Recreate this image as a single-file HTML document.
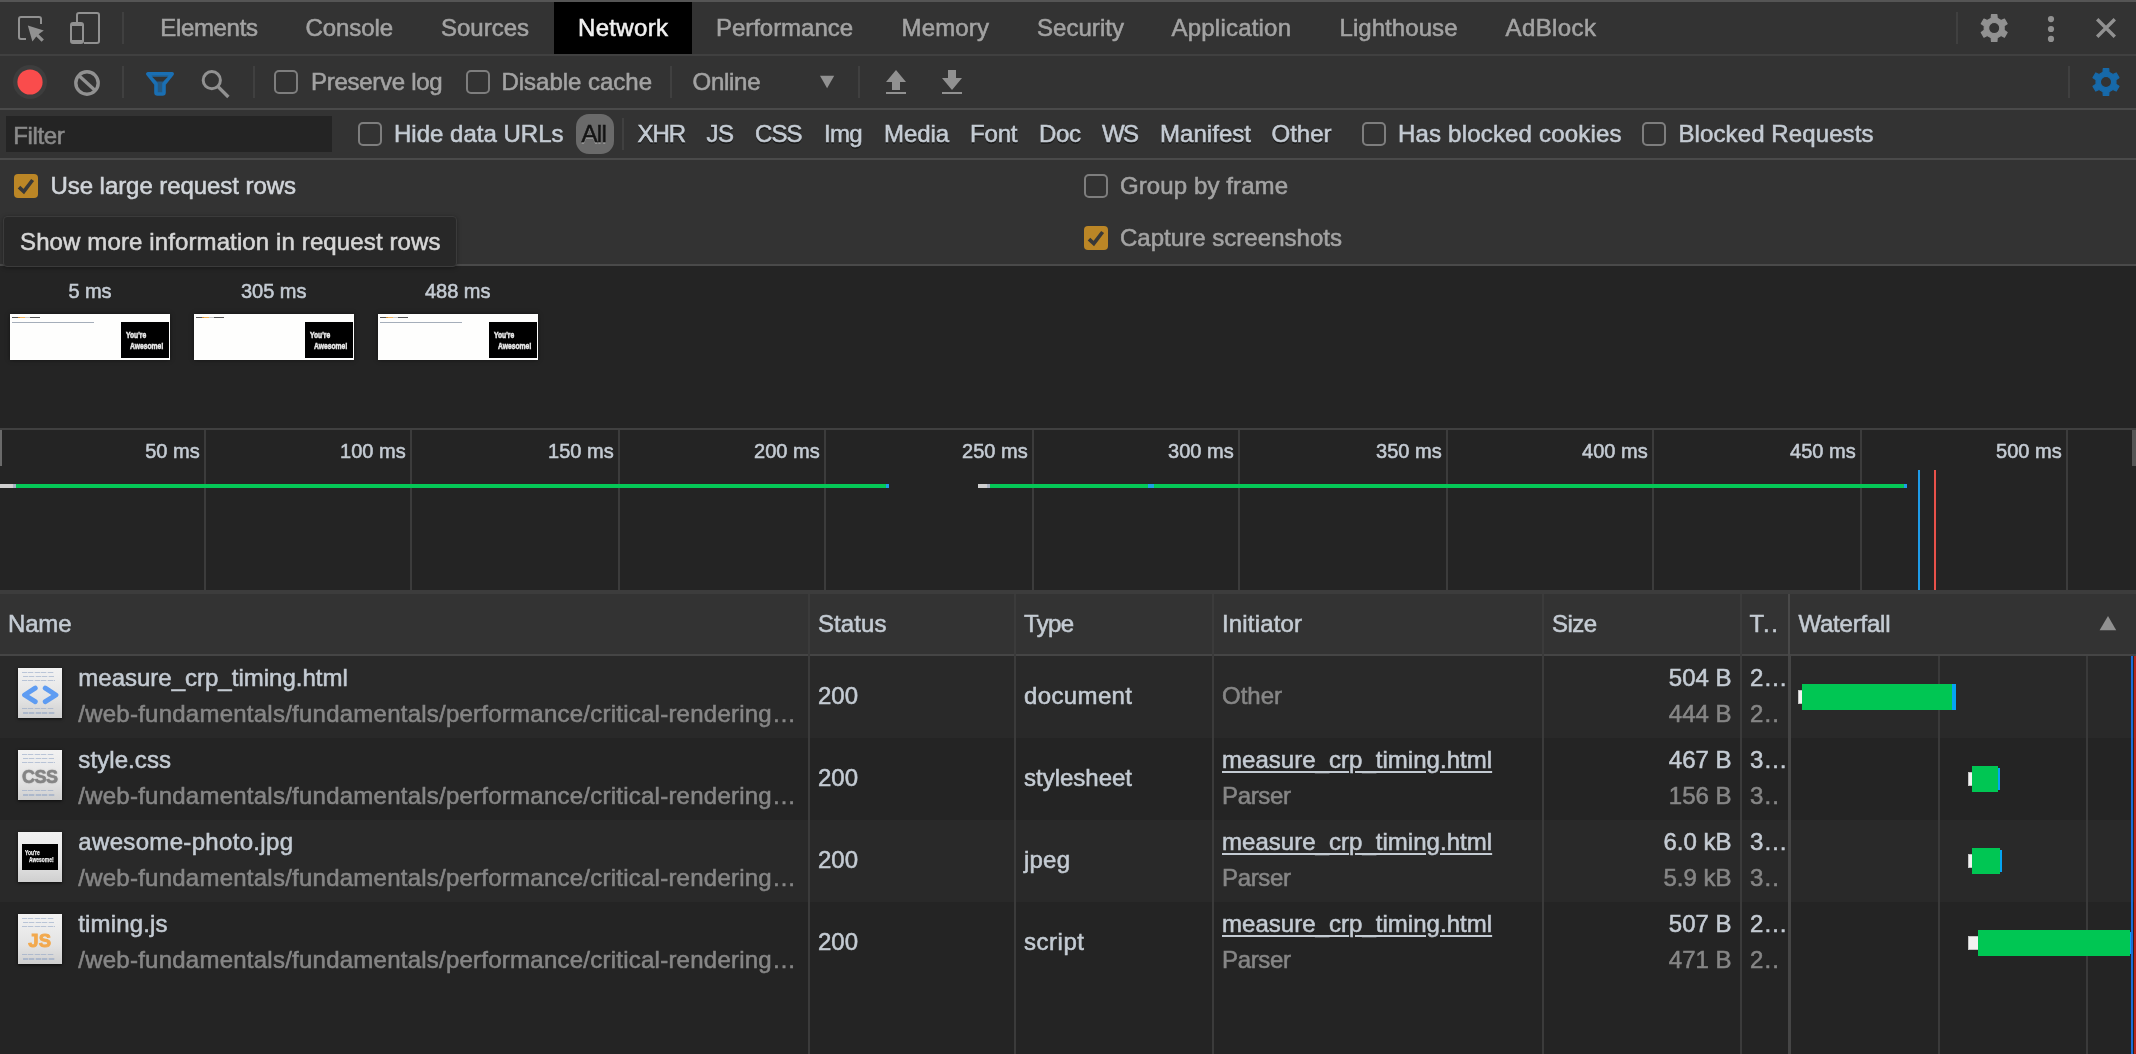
<!DOCTYPE html>
<html><head><meta charset="utf-8"><title>DevTools - Network</title>
<style>
html,body{margin:0;padding:0;background:#242424;}
#root{will-change:transform;position:relative;width:2136px;height:1054px;overflow:hidden;background:#242424;font-family:'Liberation Sans',sans-serif;}
.t{position:absolute;white-space:pre;font-family:'Liberation Sans',sans-serif;-webkit-text-stroke:0.55px;}
.b{position:absolute;}
svg{position:absolute;overflow:visible;}
.cb{position:absolute;width:24px;height:24px;box-sizing:border-box;border:2px solid #7e7e7e;border-radius:5px;}
.cbc{position:absolute;width:24px;height:24px;border-radius:4px;background:#bb8626;}
.vd{position:absolute;width:2px;background:#474747;}
@media (max-width:1100px){#root{zoom:.5}}

</style></head>
<body>
<div id="root">
<div class=b style="left:0px;top:0px;width:2136px;height:264px;background:#333;"></div>
<div class=b style="left:0px;top:0px;width:2136px;height:2px;background:#555;"></div>
<div class=b style="left:0px;top:54px;width:2136px;height:2px;background:#404040;"></div>
<div class=b style="left:554px;top:2px;width:138px;height:52px;background:#000;"></div>
<div class=b style="left:0px;top:108px;width:2136px;height:2px;background:#4a4a4a;"></div>
<div class=b style="left:0px;top:158px;width:2136px;height:2px;background:#4a4a4a;"></div>
<div class=b style="left:0px;top:264px;width:2136px;height:2px;background:#4a4a4a;"></div>
<div class=b style="left:0px;top:428px;width:2136px;height:2px;background:#404040;"></div>
<div class=b style="left:0px;top:590px;width:2136px;height:4px;background:#3c3c3c;"></div>
<div class=b style="left:0px;top:594px;width:2136px;height:60px;background:#333;"></div>
<div class=b style="left:0px;top:654px;width:2136px;height:2px;background:#454545;"></div>
<div class=b style="left:0px;top:656px;width:2136px;height:82px;background:#292929;"></div>
<div class=b style="left:0px;top:820px;width:2136px;height:82px;background:#292929;"></div>
<svg style="left:16px;top:12px" width="32" height="32" viewBox="16 12 32 32">
<path d="M41 24 V19 a2 2 0 0 0 -2 -2 H21 a2 2 0 0 0 -2 2 V37 a2 2 0 0 0 2 2 H26" fill="none" stroke="#919191" stroke-width="2"/>
<path d="M27.8 25.6 L43.8 30.6 L38.6 34.2 L43.9 39.5 L41.6 41.8 L36.3 36.5 L32.4 41.4 Z" fill="#919191"/></svg>
<svg style="left:68px;top:10px" width="36" height="36" viewBox="68 10 36 36">
<path d="M77 22 V15 a2 2 0 0 1 2 -2 H97 a2 2 0 0 1 2 2 V41 a2 2 0 0 1 -2 2 H84" fill="none" stroke="#919191" stroke-width="2"/>
<rect x="71" y="23" width="12" height="20" rx="2" fill="none" stroke="#919191" stroke-width="2"/>
<rect x="71" y="23" width="12" height="3" fill="#919191"/><rect x="71" y="40" width="12" height="3" fill="#919191"/></svg>
<div class=b style="left:122px;top:12px;width:2px;height:32px;background:#404040;"></div>
<div class=b style="left:1956px;top:12px;width:2px;height:32px;background:#404040;"></div>
<div class=b style="left:122px;top:66px;width:2px;height:32px;background:#404040;"></div>
<div class=b style="left:253px;top:66px;width:2px;height:32px;background:#404040;"></div>
<div class=b style="left:670px;top:66px;width:2px;height:32px;background:#404040;"></div>
<div class=b style="left:858px;top:66px;width:2px;height:32px;background:#404040;"></div>
<div class=b style="left:2068px;top:66px;width:2px;height:32px;background:#404040;"></div>
<div class=b style="left:622px;top:118px;width:2px;height:32px;background:#404040;"></div>
<svg style="left:1976px;top:10px" width="36" height="36" viewBox="1976 10 36 36"><path d="M1991.19 18.36 L1991.49 14.72 L1996.91 14.72 L1997.21 18.36 L2001.13 20.62 L2004.43 19.06 L2007.14 23.76 L2004.15 25.84 L2004.15 30.36 L2007.14 32.44 L2004.43 37.14 L2001.13 35.58 L1997.21 37.84 L1996.91 41.48 L1991.49 41.48 L1991.19 37.84 L1987.27 35.58 L1983.97 37.14 L1981.26 32.44 L1984.25 30.36 L1984.25 25.84 L1981.26 23.76 L1983.97 19.06 L1987.27 20.62Z M1988.60 28.10 a5.6 5.6 0 1 0 11.2 0 a5.6 5.6 0 1 0 -11.2 0Z" fill="#919191" fill-rule="evenodd" stroke="#919191" stroke-width="1.2" stroke-linejoin="round"/></svg>
<svg style="left:2088px;top:64px" width="36" height="36" viewBox="2088 64 36 36"><path d="M2102.99 72.26 L2103.29 68.62 L2108.71 68.62 L2109.01 72.26 L2112.93 74.52 L2116.23 72.96 L2118.94 77.66 L2115.95 79.74 L2115.95 84.26 L2118.94 86.34 L2116.23 91.04 L2112.93 89.48 L2109.01 91.74 L2108.71 95.38 L2103.29 95.38 L2102.99 91.74 L2099.07 89.48 L2095.77 91.04 L2093.06 86.34 L2096.05 84.26 L2096.05 79.74 L2093.06 77.66 L2095.77 72.96 L2099.07 74.52Z M2100.40 82.00 a5.6 5.6 0 1 0 11.2 0 a5.6 5.6 0 1 0 -11.2 0Z" fill="#1769a9" fill-rule="evenodd" stroke="#1769a9" stroke-width="1.2" stroke-linejoin="round"/></svg>
<svg style="left:2040px;top:10px" width="22" height="36" viewBox="2040 10 22 36"><circle cx="2051" cy="19.1" r="3.1" fill="#919191"/><circle cx="2051" cy="29" r="3.1" fill="#919191"/><circle cx="2051" cy="38.9" r="3.1" fill="#919191"/></svg>
<svg style="left:2090px;top:12px" width="32" height="32" viewBox="2090 12 32 32"><path d="M2097.2 19.2 L2114.8 36.8 M2114.8 19.2 L2097.2 36.8" stroke="#919191" stroke-width="3.4" fill="none"/></svg>
<svg style="left:10px;top:62px" width="40" height="40" viewBox="10 62 40 40"><circle cx="30" cy="82" r="17" fill="#3d3d3d"/><circle cx="30" cy="82" r="12.6" fill="#fa4c4c"/></svg>
<svg style="left:70px;top:66px" width="34" height="34" viewBox="70 66 34 34"><circle cx="87" cy="83" r="11.2" fill="none" stroke="#919191" stroke-width="3.4"/><path d="M78.8 75.6 L95.2 90.4" stroke="#919191" stroke-width="3.4"/></svg>
<svg style="left:144px;top:70px" width="32" height="28" viewBox="144 70 32 28"><path d="M147.8 73.8 H172.2 L164 84 V92.5 a1.5 1.5 0 0 1 -1.5 1.5 H157.5 a1.5 1.5 0 0 1 -1.5 -1.5 V84 Z" fill="#255982" stroke="#1a6fb3" stroke-width="3.6" stroke-linejoin="round"/><path d="M152.4 77 H167.6 L163 81.6 H157 Z" fill="#333"/></svg>
<svg style="left:198px;top:66px" width="36" height="36" viewBox="198 66 36 36"><circle cx="211.8" cy="80.2" r="8.6" fill="none" stroke="#919191" stroke-width="3"/><path d="M218 86.6 L228.4 97" stroke="#919191" stroke-width="3.4"/></svg>
<svg style="left:818px;top:74px" width="18" height="16" viewBox="818 74 18 16"><path d="M820 75.7 H834.2 L827.1 88.2 Z" fill="#919191"/></svg>
<svg style="left:884px;top:68px" width="24" height="28" viewBox="884 68 24 28"><path d="M896 70 L906 82 H900 V90 H892 V82 H886 Z M886 92 H906 V94 H886 Z" fill="#919191"/></svg>
<svg style="left:940px;top:68px" width="24" height="28" viewBox="940 68 24 28"><path d="M948 70 H956 V78 H962 L952 90 L942 78 H948 Z M942 92 H962 V94 H942 Z" fill="#919191"/></svg>
<div class=cb style="left:274px;top:70px"></div>
<div class=cb style="left:466px;top:70px"></div>
<div class=cb style="left:358px;top:122px"></div>
<div class=cb style="left:1362px;top:122px"></div>
<div class=cb style="left:1642px;top:122px"></div>
<div class=cbc style="left:14px;top:174px"></div>
<svg style="left:14px;top:174px" width="24" height="24" viewBox="0 0 24 24"><path d="M5 13.2 L9.8 17.6 L18.6 6" fill="none" stroke="#383838" stroke-width="3.7"/></svg>
<div class=cb style="left:1084px;top:174px"></div>
<div class=cbc style="left:1084px;top:226px"></div>
<svg style="left:1084px;top:226px" width="24" height="24" viewBox="0 0 24 24"><path d="M5 13.2 L9.8 17.6 L18.6 6" fill="none" stroke="#383838" stroke-width="3.7"/></svg>
<div class=b style="left:6px;top:116px;width:326px;height:36px;background:#242424;"></div>
<div class=b style="left:576px;top:114px;width:38px;height:40px;background:#6a6a6a;border-radius:13px;"></div>
<div class=b style="left:3px;top:216px;width:454px;height:51px;background:#282828;box-sizing:border-box;border:1px solid #3b3b3b;border-radius:4px;box-shadow:0 1px 4px rgba(0,0,0,.35);"></div>
<div class=b style="left:10px;top:314px;width:160px;height:46px;background:#fefefd;box-shadow:0 0 4px rgba(0,0,0,.5)"></div>
<div class=b style="left:121px;top:322px;width:48px;height:36px;background:#000;"></div>
<div class=b style="left:11.5px;top:316.6px;width:8px;height:1.6px;background:#555;"></div>
<div class=b style="left:17.5px;top:316.6px;width:7px;height:1.6px;background:#f0a030;opacity:.8"></div>
<div class=b style="left:24.5px;top:316.6px;width:5px;height:1.6px;background:#ccc;"></div>
<div class=b style="left:29.5px;top:316.6px;width:10px;height:1.6px;background:#555;"></div>
<div class=b style="left:11.5px;top:322.1px;width:82px;height:1.3px;background:#7f8c9c;opacity:.7"></div>
<span class=t style="left:126px;top:330.2px;font-size:9.5px;line-height:10px;font-weight:bold;color:#e8e8e8;transform:scaleX(.71);transform-origin:0 0">You're</span>
<span class=t style="left:129.7px;top:340.6px;font-size:9.5px;line-height:10px;font-weight:bold;color:#e8e8e8;transform:scaleX(.71);transform-origin:0 0">Awesome!</span>
<div class=b style="left:194px;top:314px;width:160px;height:46px;background:#fefefd;box-shadow:0 0 4px rgba(0,0,0,.5)"></div>
<div class=b style="left:305px;top:322px;width:48px;height:36px;background:#000;"></div>
<div class=b style="left:195.5px;top:316.6px;width:8px;height:1.6px;background:#555;"></div>
<div class=b style="left:201.5px;top:316.6px;width:7px;height:1.6px;background:#f0a030;opacity:.8"></div>
<div class=b style="left:208.5px;top:316.6px;width:5px;height:1.6px;background:#ccc;"></div>
<div class=b style="left:213.5px;top:316.6px;width:10px;height:1.6px;background:#555;"></div>
<span class=t style="left:310px;top:330.2px;font-size:9.5px;line-height:10px;font-weight:bold;color:#e8e8e8;transform:scaleX(.71);transform-origin:0 0">You're</span>
<span class=t style="left:313.7px;top:340.6px;font-size:9.5px;line-height:10px;font-weight:bold;color:#e8e8e8;transform:scaleX(.71);transform-origin:0 0">Awesome!</span>
<div class=b style="left:378px;top:314px;width:160px;height:46px;background:#fefefd;box-shadow:0 0 4px rgba(0,0,0,.5)"></div>
<div class=b style="left:489px;top:322px;width:48px;height:36px;background:#000;"></div>
<div class=b style="left:379.5px;top:316.6px;width:8px;height:1.6px;background:#555;"></div>
<div class=b style="left:385.5px;top:316.6px;width:7px;height:1.6px;background:#f0a030;opacity:.8"></div>
<div class=b style="left:392.5px;top:316.6px;width:5px;height:1.6px;background:#ccc;"></div>
<div class=b style="left:397.5px;top:316.6px;width:10px;height:1.6px;background:#555;"></div>
<div class=b style="left:379.5px;top:322.1px;width:82px;height:1.3px;background:#7f8c9c;opacity:.7"></div>
<span class=t style="left:494px;top:330.2px;font-size:9.5px;line-height:10px;font-weight:bold;color:#e8e8e8;transform:scaleX(.71);transform-origin:0 0">You're</span>
<span class=t style="left:497.7px;top:340.6px;font-size:9.5px;line-height:10px;font-weight:bold;color:#e8e8e8;transform:scaleX(.71);transform-origin:0 0">Awesome!</span>
<div class=b style="left:204px;top:430px;width:2px;height:160px;background:#3c3c3c;"></div>
<div class=b style="left:410px;top:430px;width:2px;height:160px;background:#3c3c3c;"></div>
<div class=b style="left:618px;top:430px;width:2px;height:160px;background:#3c3c3c;"></div>
<div class=b style="left:824px;top:430px;width:2px;height:160px;background:#3c3c3c;"></div>
<div class=b style="left:1032px;top:430px;width:2px;height:160px;background:#3c3c3c;"></div>
<div class=b style="left:1238px;top:430px;width:2px;height:160px;background:#3c3c3c;"></div>
<div class=b style="left:1446px;top:430px;width:2px;height:160px;background:#3c3c3c;"></div>
<div class=b style="left:1652px;top:430px;width:2px;height:160px;background:#3c3c3c;"></div>
<div class=b style="left:1860px;top:430px;width:2px;height:160px;background:#3c3c3c;"></div>
<div class=b style="left:2066px;top:430px;width:2px;height:160px;background:#3c3c3c;"></div>
<div class=b style="left:0px;top:430px;width:2px;height:36px;background:#6a6a6a;"></div>
<div class=b style="left:2132px;top:430px;width:4px;height:36px;background:#555;"></div>
<div class=b style="left:0px;top:484px;width:13px;height:4px;background:#cfcfcf;"></div>
<div class=b style="left:13px;top:484px;width:3px;height:4px;background:#a9b4c4;"></div>
<div class=b style="left:16px;top:484px;width:870px;height:4px;background:#05c757;"></div>
<div class=b style="left:886px;top:484px;width:3px;height:4px;background:#1e9be8;"></div>
<div class=b style="left:978px;top:484px;width:9px;height:4px;background:#cfcfcf;"></div>
<div class=b style="left:987px;top:484px;width:3px;height:4px;background:#a9b4c4;"></div>
<div class=b style="left:990px;top:484px;width:914px;height:4px;background:#05c757;"></div>
<div class=b style="left:1148px;top:484px;width:6px;height:4px;background:#1ba4e0;"></div>
<div class=b style="left:1904px;top:484px;width:3px;height:4px;background:#1e9be8;"></div>
<div class=b style="left:1918px;top:470px;width:2px;height:120px;background:#1e9be8;"></div>
<div class=b style="left:1934px;top:470px;width:2px;height:120px;background:#e8514a;"></div>
<div class=b style="left:808px;top:594px;width:2px;height:460px;background:#3b3b3b;"></div>
<div class=b style="left:1014px;top:594px;width:2px;height:460px;background:#3b3b3b;"></div>
<div class=b style="left:1212px;top:594px;width:2px;height:460px;background:#3b3b3b;"></div>
<div class=b style="left:1542px;top:594px;width:2px;height:460px;background:#3b3b3b;"></div>
<div class=b style="left:1740px;top:594px;width:2px;height:460px;background:#3b3b3b;"></div>
<div class=b style="left:1788px;top:594px;width:2px;height:62px;background:#494949;"></div>
<div class=b style="left:1788px;top:656px;width:3px;height:398px;background:#454545;"></div>
<div class=b style="left:1938px;top:656px;width:2px;height:398px;background:#3a3a3a;"></div>
<div class=b style="left:2086px;top:656px;width:2px;height:398px;background:#3a3a3a;"></div>
<div class=b style="left:2131px;top:656px;width:2px;height:398px;background:#1a6fd8;"></div>
<div class=b style="left:2134px;top:656px;width:2px;height:398px;background:#b8261e;"></div>
<svg style="left:2098px;top:614px" width="20" height="18" viewBox="2098 614 20 18"><path d="M2108 616 L2116.2 630.3 H2099.6 Z" fill="#919191"/></svg>
<div class=b style="left:1798px;top:690px;width:4px;height:14px;background:#f2f2f2;box-sizing:border-box;border:1px solid #c4c4c4;border-right:0;"></div>
<div class=b style="left:1802px;top:684px;width:150px;height:26px;background:#00c653;"></div>
<div class=b style="left:1952px;top:684px;width:4px;height:26px;background:#05a4f2;"></div>
<div class=b style="left:1968px;top:772px;width:4px;height:14px;background:#f2f2f2;box-sizing:border-box;border:1px solid #c4c4c4;border-right:0;"></div>
<div class=b style="left:1972px;top:766px;width:26px;height:26px;background:#00c653;"></div>
<div class=b style="left:1998px;top:768px;width:2px;height:22px;background:#05a4f2;"></div>
<div class=b style="left:1968px;top:854px;width:4px;height:14px;background:#f2f2f2;box-sizing:border-box;border:1px solid #c4c4c4;border-right:0;"></div>
<div class=b style="left:1972px;top:848px;width:28px;height:26px;background:#00c653;"></div>
<div class=b style="left:2000px;top:850px;width:2px;height:22px;background:#05a4f2;"></div>
<div class=b style="left:1968px;top:936px;width:10px;height:14px;background:#f2f2f2;box-sizing:border-box;border:1px solid #c4c4c4;border-right:0;"></div>
<div class=b style="left:1978px;top:930px;width:152px;height:26px;background:#00c653;"></div>
<div class=b style="left:2130px;top:932px;width:1px;height:22px;background:#05a4f2;"></div>
<div class=b style="left:18px;top:668px;width:44px;height:50px;background:linear-gradient(#f2f2f2,#e4e4e4 60%,#cfcfcf);box-shadow:0 1px 3px rgba(0,0,0,.7);"></div>
<div class=b style="left:22px;top:672.2px;width:32px;height:1.3px;background:repeating-linear-gradient(90deg,#8da2c4 0 5px,rgba(141,162,196,.3) 5px 6.5px);opacity:.55"></div>
<div class=b style="left:23px;top:676.0px;width:31px;height:1.3px;background:repeating-linear-gradient(90deg,#8da2c4 0 5px,rgba(141,162,196,.3) 5px 6.5px);opacity:.55"></div>
<div class=b style="left:22px;top:680.0px;width:33px;height:1.3px;background:repeating-linear-gradient(90deg,#8da2c4 0 5px,rgba(141,162,196,.3) 5px 6.5px);opacity:.55"></div>
<div class=b style="left:22px;top:708.2px;width:32px;height:1.3px;background:repeating-linear-gradient(90deg,#8da2c4 0 5px,rgba(141,162,196,.3) 5px 6.5px);opacity:.55"></div>
<div class=b style="left:23px;top:712.3px;width:32px;height:1.3px;background:repeating-linear-gradient(90deg,#8da2c4 0 5px,rgba(141,162,196,.3) 5px 6.5px);opacity:.55"></div>
<svg style="left:18px;top:668px" width="44" height="50" viewBox="0 0 44 50"><path d="M17.2 20.2 L6.6 27 L17.2 33.7 M27.3 20.2 L37.9 27 L27.3 33.7" fill="none" stroke="#5e9cf2" stroke-width="5" stroke-linecap="round" stroke-linejoin="round"/></svg>
<div class=b style="left:18px;top:750px;width:44px;height:50px;background:linear-gradient(#f2f2f2,#e4e4e4 60%,#cfcfcf);box-shadow:0 1px 3px rgba(0,0,0,.7);"></div>
<div class=b style="left:22px;top:754.2px;width:32px;height:1.3px;background:repeating-linear-gradient(90deg,#8da2c4 0 5px,rgba(141,162,196,.3) 5px 6.5px);opacity:.55"></div>
<div class=b style="left:23px;top:758.0px;width:31px;height:1.3px;background:repeating-linear-gradient(90deg,#8da2c4 0 5px,rgba(141,162,196,.3) 5px 6.5px);opacity:.55"></div>
<div class=b style="left:22px;top:762.0px;width:33px;height:1.3px;background:repeating-linear-gradient(90deg,#8da2c4 0 5px,rgba(141,162,196,.3) 5px 6.5px);opacity:.55"></div>
<div class=b style="left:22px;top:790.2px;width:32px;height:1.3px;background:repeating-linear-gradient(90deg,#8da2c4 0 5px,rgba(141,162,196,.3) 5px 6.5px);opacity:.55"></div>
<div class=b style="left:23px;top:794.3px;width:32px;height:1.3px;background:repeating-linear-gradient(90deg,#8da2c4 0 5px,rgba(141,162,196,.3) 5px 6.5px);opacity:.55"></div>
<span class=t style="left:22px;top:766.6px;font-size:18px;line-height:20px;font-weight:bold;color:#858585;letter-spacing:-0.5px;-webkit-text-stroke:0.5px;text-shadow:0 0 1.5px rgba(90,90,90,.6)">CSS</span>
<div class=b style="left:18px;top:832px;width:44px;height:50px;background:linear-gradient(#f2f2f2,#e4e4e4 60%,#cfcfcf);box-shadow:0 1px 3px rgba(0,0,0,.7);"></div>
<div class=b style="left:22px;top:844.2px;width:36px;height:25.6px;background:#000;"></div>
<span class=t style="left:25.4px;top:849.9px;font-size:6.4px;line-height:6.4px;font-weight:bold;color:#eee;-webkit-text-stroke:0.25px;transform:scaleX(.77);transform-origin:0 0">You're</span>
<span class=t style="left:28.9px;top:857.3px;font-size:6.4px;line-height:6.4px;font-weight:bold;color:#eee;-webkit-text-stroke:0.25px;transform:scaleX(.77);transform-origin:0 0">Awesome!</span>
<div class=b style="left:18px;top:914px;width:44px;height:50px;background:linear-gradient(#f2f2f2,#e4e4e4 60%,#cfcfcf);box-shadow:0 1px 3px rgba(0,0,0,.7);"></div>
<div class=b style="left:22px;top:918.2px;width:32px;height:1.3px;background:repeating-linear-gradient(90deg,#8da2c4 0 5px,rgba(141,162,196,.3) 5px 6.5px);opacity:.55"></div>
<div class=b style="left:23px;top:922.0px;width:31px;height:1.3px;background:repeating-linear-gradient(90deg,#8da2c4 0 5px,rgba(141,162,196,.3) 5px 6.5px);opacity:.55"></div>
<div class=b style="left:22px;top:926.0px;width:33px;height:1.3px;background:repeating-linear-gradient(90deg,#8da2c4 0 5px,rgba(141,162,196,.3) 5px 6.5px);opacity:.55"></div>
<div class=b style="left:22px;top:954.2px;width:32px;height:1.3px;background:repeating-linear-gradient(90deg,#8da2c4 0 5px,rgba(141,162,196,.3) 5px 6.5px);opacity:.55"></div>
<div class=b style="left:23px;top:958.3px;width:32px;height:1.3px;background:repeating-linear-gradient(90deg,#8da2c4 0 5px,rgba(141,162,196,.3) 5px 6.5px);opacity:.55"></div>
<span class=t style="left:28.2px;top:931.3px;font-size:18.5px;line-height:20px;font-weight:bold;color:#f2a94e;letter-spacing:0.3px;-webkit-text-stroke:0.9px">JS</span>
<span class=t style="left:160.3px;top:15.7px;font-size:24px;line-height:24px;color:#a3a3a3;letter-spacing:-0.34px;">Elements</span>
<span class=t style="left:305.5px;top:15.7px;font-size:24px;line-height:24px;color:#a3a3a3;letter-spacing:-0.09px;">Console</span>
<span class=t style="left:441.0px;top:15.7px;font-size:24px;line-height:24px;color:#a3a3a3;letter-spacing:-0.01px;">Sources</span>
<span class=t style="left:716.0px;top:15.7px;font-size:24px;line-height:24px;color:#a3a3a3;letter-spacing:-0.04px;">Performance</span>
<span class=t style="left:901.5px;top:15.7px;font-size:24px;line-height:24px;color:#a3a3a3;letter-spacing:0.17px;">Memory</span>
<span class=t style="left:1037.0px;top:15.7px;font-size:24px;line-height:24px;color:#a3a3a3;letter-spacing:0.04px;">Security</span>
<span class=t style="left:1171.5px;top:15.7px;font-size:24px;line-height:24px;color:#a3a3a3;letter-spacing:0.21px;">Application</span>
<span class=t style="left:1339.5px;top:15.7px;font-size:24px;line-height:24px;color:#a3a3a3;letter-spacing:0.06px;">Lighthouse</span>
<span class=t style="left:1505.5px;top:15.7px;font-size:24px;line-height:24px;color:#a3a3a3;letter-spacing:0.41px;">AdBlock</span>
<span class=t style="left:578.0px;top:15.7px;font-size:24px;line-height:24px;color:#f0f0f0;letter-spacing:0.33px;">Network</span>
<span class=t style="left:311.0px;top:69.7px;font-size:24px;line-height:24px;color:#a3a3a3;letter-spacing:-0.28px;">Preserve log</span>
<span class=t style="left:501.5px;top:69.7px;font-size:24px;line-height:24px;color:#a3a3a3;letter-spacing:-0.02px;">Disable cache</span>
<span class=t style="left:692.5px;top:69.7px;font-size:24px;line-height:24px;color:#a3a3a3;letter-spacing:-0.28px;">Online</span>
<span class=t style="left:13.2px;top:123.5px;font-size:24px;line-height:24px;color:#8a8a8a;letter-spacing:-0.35px;">Filter</span>
<span class=t style="left:394.0px;top:121.7px;font-size:24px;line-height:24px;color:#c4cbd3;letter-spacing:0.01px;">Hide data URLs</span>
<span class=t style="left:581.5px;top:121.5px;font-size:24px;line-height:24px;color:#141414;letter-spacing:-0.69px;text-shadow:0 1.5px 0 rgba(255,255,255,.28);">All</span>
<span class=t style="left:637.5px;top:121.5px;font-size:24px;line-height:24px;color:#c4cbd3;letter-spacing:-1.09px;text-shadow:0 1.5px 0 rgba(0,0,0,.45);">XHR</span>
<span class=t style="left:706.5px;top:121.5px;font-size:24px;line-height:24px;color:#c4cbd3;letter-spacing:-0.52px;text-shadow:0 1.5px 0 rgba(0,0,0,.45);">JS</span>
<span class=t style="left:755.0px;top:121.5px;font-size:24px;line-height:24px;color:#c4cbd3;letter-spacing:-0.93px;text-shadow:0 1.5px 0 rgba(0,0,0,.45);">CSS</span>
<span class=t style="left:824.0px;top:121.5px;font-size:24px;line-height:24px;color:#c4cbd3;letter-spacing:-0.76px;text-shadow:0 1.5px 0 rgba(0,0,0,.45);">Img</span>
<span class=t style="left:884.0px;top:121.5px;font-size:24px;line-height:24px;color:#c4cbd3;letter-spacing:-0.09px;text-shadow:0 1.5px 0 rgba(0,0,0,.45);">Media</span>
<span class=t style="left:970.0px;top:121.5px;font-size:24px;line-height:24px;color:#c4cbd3;letter-spacing:-0.18px;text-shadow:0 1.5px 0 rgba(0,0,0,.45);">Font</span>
<span class=t style="left:1039.0px;top:121.5px;font-size:24px;line-height:24px;color:#c4cbd3;letter-spacing:-0.34px;text-shadow:0 1.5px 0 rgba(0,0,0,.45);">Doc</span>
<span class=t style="left:1102.0px;top:121.5px;font-size:24px;line-height:24px;color:#c4cbd3;letter-spacing:-1.67px;text-shadow:0 1.5px 0 rgba(0,0,0,.45);">WS</span>
<span class=t style="left:1160.0px;top:121.5px;font-size:24px;line-height:24px;color:#c4cbd3;letter-spacing:0.04px;text-shadow:0 1.5px 0 rgba(0,0,0,.45);">Manifest</span>
<span class=t style="left:1271.5px;top:121.5px;font-size:24px;line-height:24px;color:#c4cbd3;letter-spacing:-0.01px;text-shadow:0 1.5px 0 rgba(0,0,0,.45);">Other</span>
<span class=t style="left:1398.0px;top:121.5px;font-size:24px;line-height:24px;color:#c4cbd3;letter-spacing:0.19px;">Has blocked cookies</span>
<span class=t style="left:1678.5px;top:121.5px;font-size:24px;line-height:24px;color:#c4cbd3;letter-spacing:0.10px;">Blocked Requests</span>
<span class=t style="left:50.5px;top:174.2px;font-size:24px;line-height:24px;color:#d0d4d9;letter-spacing:-0.06px;">Use large request rows</span>
<span class=t style="left:20.0px;top:230.0px;font-size:24px;line-height:24px;color:#d6d6d6;letter-spacing:0.12px;">Show more information in request rows</span>
<span class=t style="left:1120.0px;top:174.2px;font-size:24px;line-height:24px;color:#a3a3a3;letter-spacing:0.10px;">Group by frame</span>
<span class=t style="left:1120.0px;top:226.2px;font-size:24px;line-height:24px;color:#a3a3a3;letter-spacing:0.03px;">Capture screenshots</span>
<span class=t style="left:68.5px;top:281.1px;font-size:20px;line-height:20px;color:#c4cbd3;letter-spacing:-0.08px;">5 ms</span>
<span class=t style="left:241.0px;top:281.1px;font-size:20px;line-height:20px;color:#c4cbd3;letter-spacing:-0.02px;">305 ms</span>
<span class=t style="left:425.0px;top:281.1px;font-size:20px;line-height:20px;color:#c4cbd3;letter-spacing:-0.02px;">488 ms</span>
<span class=t style="left:145.2px;top:441.1px;font-size:20px;line-height:20px;color:#c4cbd3;">50 ms</span>
<span class=t style="left:340.1px;top:441.1px;font-size:20px;line-height:20px;color:#c4cbd3;">100 ms</span>
<span class=t style="left:548.1px;top:441.1px;font-size:20px;line-height:20px;color:#c4cbd3;">150 ms</span>
<span class=t style="left:754.1px;top:441.1px;font-size:20px;line-height:20px;color:#c4cbd3;">200 ms</span>
<span class=t style="left:962.1px;top:441.1px;font-size:20px;line-height:20px;color:#c4cbd3;">250 ms</span>
<span class=t style="left:1168.1px;top:441.1px;font-size:20px;line-height:20px;color:#c4cbd3;">300 ms</span>
<span class=t style="left:1376.1px;top:441.1px;font-size:20px;line-height:20px;color:#c4cbd3;">350 ms</span>
<span class=t style="left:1582.1px;top:441.1px;font-size:20px;line-height:20px;color:#c4cbd3;">400 ms</span>
<span class=t style="left:1790.1px;top:441.1px;font-size:20px;line-height:20px;color:#c4cbd3;">450 ms</span>
<span class=t style="left:1996.1px;top:441.1px;font-size:20px;line-height:20px;color:#c4cbd3;">500 ms</span>
<span class=t style="left:8.0px;top:611.7px;font-size:24px;line-height:24px;color:#c4cbd3;letter-spacing:-0.18px;">Name</span>
<span class=t style="left:818.0px;top:611.7px;font-size:24px;line-height:24px;color:#c4cbd3;letter-spacing:0.09px;">Status</span>
<span class=t style="left:1024.0px;top:611.7px;font-size:24px;line-height:24px;color:#c4cbd3;letter-spacing:-0.68px;">Type</span>
<span class=t style="left:1222.0px;top:611.7px;font-size:24px;line-height:24px;color:#c4cbd3;letter-spacing:0.16px;">Initiator</span>
<span class=t style="left:1552.0px;top:611.7px;font-size:24px;line-height:24px;color:#c4cbd3;letter-spacing:-0.56px;">Size</span>
<span class=t style="left:1749.5px;top:611.7px;font-size:24px;line-height:24px;color:#c4cbd3;letter-spacing:1.58px;">T..</span>
<span class=t style="left:1798.4px;top:611.7px;font-size:24px;line-height:24px;color:#c4cbd3;letter-spacing:-0.20px;">Waterfall</span>
<span class=t style="left:78.3px;top:665.5px;font-size:24px;line-height:24px;color:#c4cbd3;">measure_crp_timing.html</span>
<span class=t style="left:78.3px;top:701.7px;font-size:24px;line-height:24px;color:#868686;letter-spacing:0.24px;">/web-fundamentals/fundamentals/performance/critical-rendering…</span>
<span class=t style="left:818.0px;top:683.7px;font-size:24px;line-height:24px;color:#c4cbd3;letter-spacing:-0.02px;">200</span>
<span class=t style="left:1024.0px;top:683.7px;font-size:24px;line-height:24px;color:#c4cbd3;letter-spacing:0.37px;">document</span>
<span class=t style="left:1222.0px;top:683.7px;font-size:24px;line-height:24px;color:#868686;letter-spacing:-0.01px;">Other</span>
<span class=t style="left:1668.8px;top:665.5px;font-size:24px;line-height:24px;color:#c4cbd3;">504 B</span>
<span class=t style="left:1668.8px;top:701.7px;font-size:24px;line-height:24px;color:#868686;">444 B</span>
<span class=t style="left:1750.0px;top:665.5px;font-size:24px;line-height:24px;color:#c4cbd3;letter-spacing:0.14px;">2…</span>
<span class=t style="left:1750.0px;top:701.7px;font-size:24px;line-height:24px;color:#868686;letter-spacing:1.16px;">2..</span>
<span class=t style="left:78.3px;top:747.5px;font-size:24px;line-height:24px;color:#c4cbd3;letter-spacing:0.09px;">style.css</span>
<span class=t style="left:78.3px;top:783.7px;font-size:24px;line-height:24px;color:#868686;letter-spacing:0.24px;">/web-fundamentals/fundamentals/performance/critical-rendering…</span>
<span class=t style="left:818.0px;top:765.7px;font-size:24px;line-height:24px;color:#c4cbd3;letter-spacing:-0.02px;">200</span>
<span class=t style="left:1024.0px;top:765.7px;font-size:24px;line-height:24px;color:#c4cbd3;letter-spacing:-0.01px;">stylesheet</span>
<span class=t style="left:1222.0px;top:747.5px;font-size:24px;line-height:24px;color:#c4cbd3;letter-spacing:0.03px;text-decoration:underline;text-decoration-thickness:1.6px;text-underline-offset:3px;">measure_crp_timing.html</span>
<span class=t style="left:1222.0px;top:783.7px;font-size:24px;line-height:24px;color:#868686;letter-spacing:-0.34px;">Parser</span>
<span class=t style="left:1668.8px;top:747.5px;font-size:24px;line-height:24px;color:#c4cbd3;">467 B</span>
<span class=t style="left:1668.8px;top:783.7px;font-size:24px;line-height:24px;color:#868686;">156 B</span>
<span class=t style="left:1750.0px;top:747.5px;font-size:24px;line-height:24px;color:#c4cbd3;letter-spacing:0.14px;">3…</span>
<span class=t style="left:1750.0px;top:783.7px;font-size:24px;line-height:24px;color:#868686;letter-spacing:1.16px;">3..</span>
<span class=t style="left:78.3px;top:829.5px;font-size:24px;line-height:24px;color:#c4cbd3;letter-spacing:0.33px;">awesome-photo.jpg</span>
<span class=t style="left:78.3px;top:865.7px;font-size:24px;line-height:24px;color:#868686;letter-spacing:0.24px;">/web-fundamentals/fundamentals/performance/critical-rendering…</span>
<span class=t style="left:818.0px;top:847.7px;font-size:24px;line-height:24px;color:#c4cbd3;letter-spacing:-0.02px;">200</span>
<span class=t style="left:1024.0px;top:847.7px;font-size:24px;line-height:24px;color:#c4cbd3;letter-spacing:0.21px;">jpeg</span>
<span class=t style="left:1222.0px;top:829.5px;font-size:24px;line-height:24px;color:#c4cbd3;letter-spacing:0.03px;text-decoration:underline;text-decoration-thickness:1.6px;text-underline-offset:3px;">measure_crp_timing.html</span>
<span class=t style="left:1222.0px;top:865.7px;font-size:24px;line-height:24px;color:#868686;letter-spacing:-0.34px;">Parser</span>
<span class=t style="left:1663.5px;top:829.5px;font-size:24px;line-height:24px;color:#c4cbd3;">6.0 kB</span>
<span class=t style="left:1663.5px;top:865.7px;font-size:24px;line-height:24px;color:#868686;">5.9 kB</span>
<span class=t style="left:1750.0px;top:829.5px;font-size:24px;line-height:24px;color:#c4cbd3;letter-spacing:0.14px;">3…</span>
<span class=t style="left:1750.0px;top:865.7px;font-size:24px;line-height:24px;color:#868686;letter-spacing:1.16px;">3..</span>
<span class=t style="left:78.3px;top:911.5px;font-size:24px;line-height:24px;color:#c4cbd3;letter-spacing:0.15px;">timing.js</span>
<span class=t style="left:78.3px;top:947.7px;font-size:24px;line-height:24px;color:#868686;letter-spacing:0.24px;">/web-fundamentals/fundamentals/performance/critical-rendering…</span>
<span class=t style="left:818.0px;top:929.7px;font-size:24px;line-height:24px;color:#c4cbd3;letter-spacing:-0.02px;">200</span>
<span class=t style="left:1024.0px;top:929.7px;font-size:24px;line-height:24px;color:#c4cbd3;letter-spacing:0.53px;">script</span>
<span class=t style="left:1222.0px;top:911.5px;font-size:24px;line-height:24px;color:#c4cbd3;letter-spacing:0.03px;text-decoration:underline;text-decoration-thickness:1.6px;text-underline-offset:3px;">measure_crp_timing.html</span>
<span class=t style="left:1222.0px;top:947.7px;font-size:24px;line-height:24px;color:#868686;letter-spacing:-0.34px;">Parser</span>
<span class=t style="left:1668.8px;top:911.5px;font-size:24px;line-height:24px;color:#c4cbd3;">507 B</span>
<span class=t style="left:1668.8px;top:947.7px;font-size:24px;line-height:24px;color:#868686;">471 B</span>
<span class=t style="left:1750.0px;top:911.5px;font-size:24px;line-height:24px;color:#c4cbd3;letter-spacing:0.14px;">2…</span>
<span class=t style="left:1750.0px;top:947.7px;font-size:24px;line-height:24px;color:#868686;letter-spacing:1.16px;">2..</span>
</div>
</body></html>
